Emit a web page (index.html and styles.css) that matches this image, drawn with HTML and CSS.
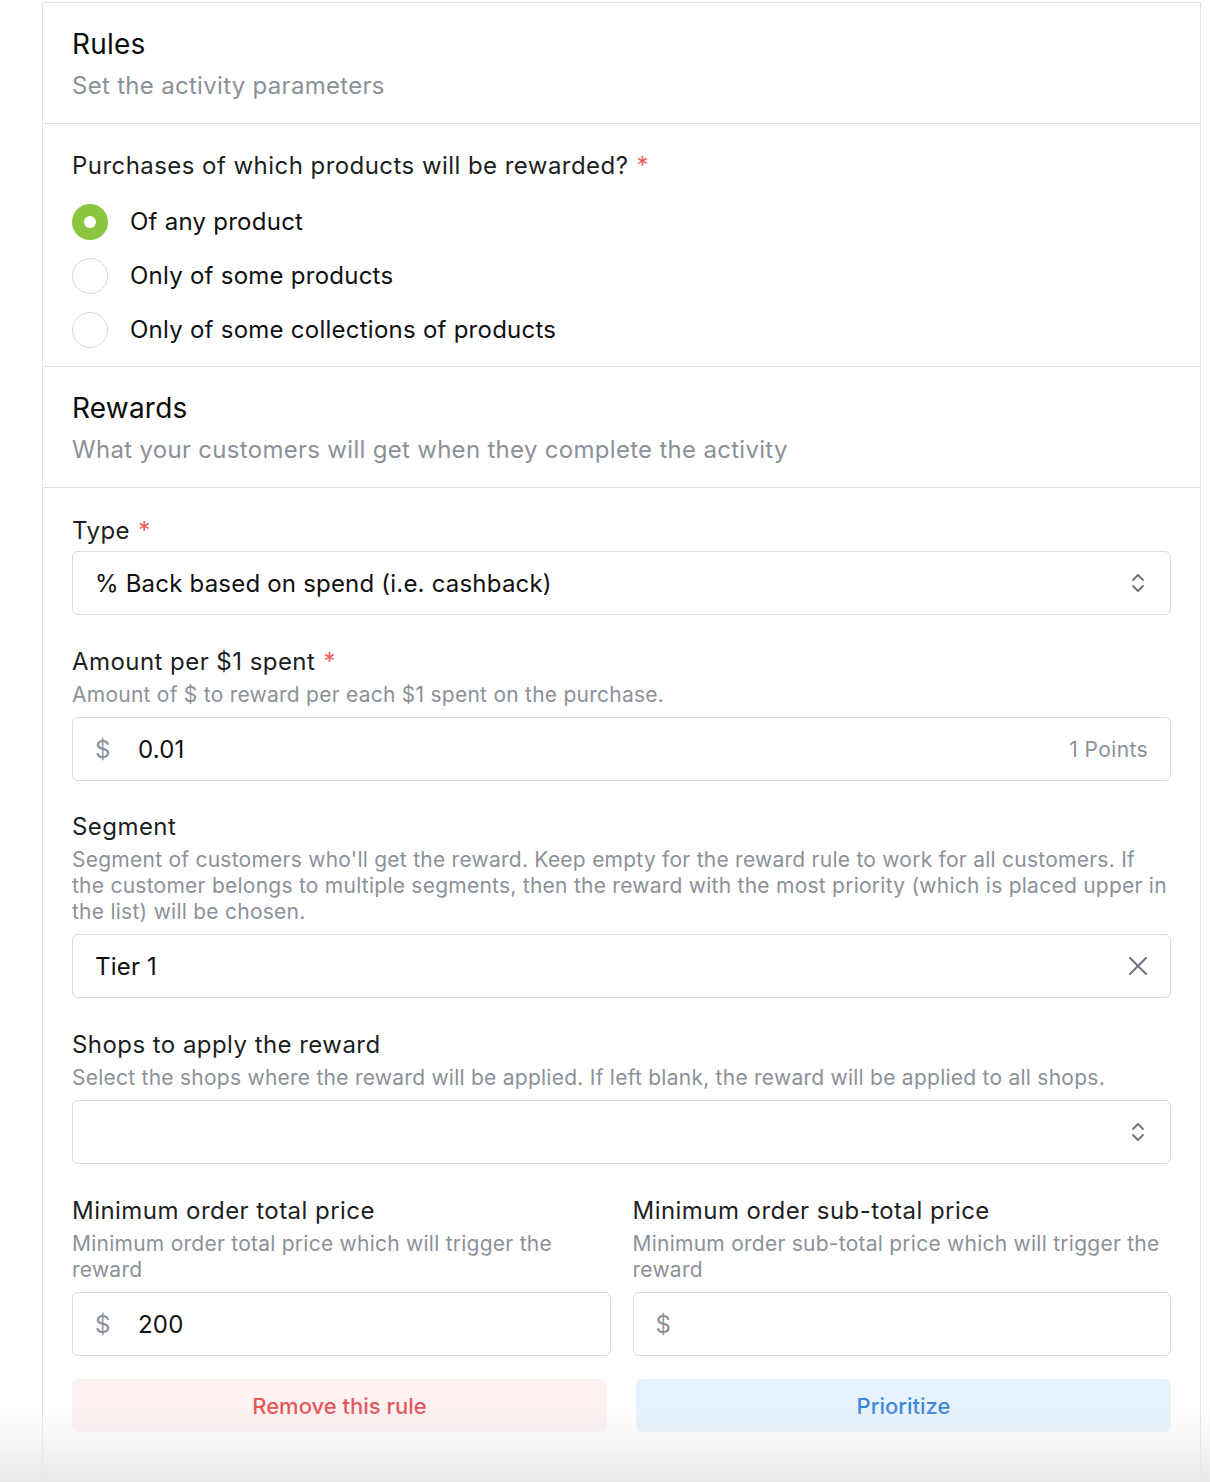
FILE: index.html
```html
<!DOCTYPE html>
<html lang="en">
<head>
<meta charset="utf-8">
<title>Rules</title>
<link rel="stylesheet" href="styles.css">
</head>
<body>
<div class="card">
  <div class="head">
    <div class="title">Rules</div>
    <div class="sub">Set the activity parameters</div>
  </div>
  <div class="section radios-section">
    <div class="label">Purchases of which products will be rewarded? <span class="req">*</span></div>
    <div class="radios">
      <div class="radio-row"><span class="radio checked"></span><span class="radio-text">Of any product</span></div>
      <div class="radio-row"><span class="radio"></span><span class="radio-text">Only of some products</span></div>
      <div class="radio-row"><span class="radio"></span><span class="radio-text">Only of some collections of products</span></div>
    </div>
  </div>
  <div class="head">
    <div class="title">Rewards</div>
    <div class="sub">What your customers will get when they complete the activity</div>
  </div>
  <div class="section form">
    <div class="field">
      <div class="label">Type <span class="req">*</span></div>
      <div class="box select">
        <span class="value">% Back based on spend (i.e. cashback)</span>
        <svg class="chev" width="16" height="22" viewBox="0 0 16 22"><path d="M3 8 L8 3 L13 8 M3 14 L8 19 L13 14" fill="none" stroke="#6b7280" stroke-width="1.8" stroke-linecap="round" stroke-linejoin="round"/></svg>
      </div>
    </div>
    <div class="field">
      <div class="label">Amount per $1 spent <span class="req">*</span></div>
      <div class="desc">Amount of $ to reward per each $1 spent on the purchase.</div>
      <div class="box money">
        <span class="cur">$</span><span class="value">0.01</span><span class="suffix">1 Points</span>
      </div>
    </div>
    <div class="field field-tight">
      <div class="label">Segment</div>
      <div class="desc">Segment of customers who'll get the reward. Keep empty for the reward rule to work for all customers. If the customer belongs to multiple segments, then the reward with the most priority (which is placed upper in the list) will be chosen.</div>
      <div class="box select">
        <span class="value">Tier 1</span>
        <svg class="x" width="20" height="20" viewBox="0 0 20 20"><path d="M2 2 L18 18 M18 2 L2 18" fill="none" stroke="#6b7280" stroke-width="2" stroke-linecap="round"/></svg>
      </div>
    </div>
    <div class="field">
      <div class="label">Shops to apply the reward</div>
      <div class="desc">Select the shops where the reward will be applied. If left blank, the reward will be applied to all shops.</div>
      <div class="box select">
        <span class="value"></span>
        <svg class="chev" width="16" height="22" viewBox="0 0 16 22"><path d="M3 8 L8 3 L13 8 M3 14 L8 19 L13 14" fill="none" stroke="#6b7280" stroke-width="1.8" stroke-linecap="round" stroke-linejoin="round"/></svg>
      </div>
    </div>
    <div class="field cols">
      <div class="col">
        <div class="label">Minimum order total price</div>
        <div class="desc">Minimum order total price which will trigger the reward</div>
        <div class="box money"><span class="cur">$</span><span class="value">200</span></div>
      </div>
      <div class="col">
        <div class="label">Minimum order sub-total price</div>
        <div class="desc">Minimum order sub-total price which will trigger the reward</div>
        <div class="box money"><span class="cur">$</span><span class="value"></span></div>
      </div>
    </div>
    <div class="actions">
      <button class="btn danger">Remove this rule</button>
      <button class="btn primary">Prioritize</button>
    </div>
  </div>
</div>
<div class="fade"></div>
</body>
</html>
```
FILE: styles.css
```css
* { box-sizing: border-box; }
html, body { margin: 0; padding: 0; background: #fff; }
body {
  font-family: Inter, "Noto Sans", "Liberation Sans", sans-serif;
  color: #1d1f23;
  height: 1482px;
  overflow: hidden;
}
.card {
  margin: 2px 0 0 42px;
  width: 1159px;
  border: 1px solid #e1e2e8;
  border-bottom: none;
  min-height: 1500px;
  background: #fff;
}
.head {
  padding: 24px 29px 20px;
  border-bottom: 1px solid #e1e2e8;
}
.title {
  font-size: 28px;
  line-height: 34px;
  color: #0b0b0c;
  letter-spacing: 0.2px;
}
.sub {
  margin-top: 8px;
  font-size: 24px;
  line-height: 34px;
  color: #8c9199;
  letter-spacing: 0.3px;
}
.section {
  padding: 25px 29px 18px;
  border-bottom: 1px solid #e1e2e8;
}
.section.form { border-bottom: none; padding-top: 26px; }
.label {
  font-size: 24px;
  line-height: 34px;
  color: #1d1f23;
  letter-spacing: 0.45px;
}
.req { color: #ef5b5b; margin-left: 1px; }
.radios {
  margin-top: 21px;
  display: flex;
  flex-direction: column;
  gap: 18px;
}
.radio-row {
  display: flex;
  align-items: center;
  height: 36px;
}
.radio {
  width: 36px;
  height: 36px;
  border-radius: 50%;
  border: 1px solid #d6d8dd;
  background: #fff;
  flex: none;
}
.radio.checked {
  border: 12px solid #8cc63f;
  background: #fff;
}
.radio-text {
  margin-left: 22px;
  font-size: 24px;
  line-height: 34px;
  letter-spacing: 0.25px;
  color: #0f1012;
}
.field { margin-top: 30px; }
.field:first-child { margin-top: 0; }
.field.field-tight { margin-top: 29px; }
.desc {
  margin-top: 3px;
  font-size: 21px;
  line-height: 26px;
  color: #8c9199;
  letter-spacing: 0.25px;
}
.box {
  margin-top: 9px;
  height: 64px;
  border: 1px solid #d6d9de;
  border-radius: 6px;
  display: flex;
  align-items: center;
  padding: 0 22px;
  font-size: 24px;
  letter-spacing: 0.2px;
  background: #fff;
}
.label + .box { margin-top: 3px; }
.box .value { flex: 1; color: #111; }
.cur { color: #8c9199; width: 43px; flex: none; }
.suffix { color: #8c9199; font-size: 21px; letter-spacing: 0.4px; }
.chev { flex: none; margin-right: 2px; }
.x { flex: none; margin-right: 0; }
.cols {
  display: grid;
  grid-template-columns: 1fr 1fr;
  column-gap: 22px;
}
.actions {
  margin-top: 23px;
  display: grid;
  grid-template-columns: 535px 535px;
  justify-content: space-between;
}
.btn {
  height: 53px;
  border: none;
  border-radius: 6px;
  font-family: Inter, Roboto, sans-serif;
  font-size: 22px;
  font-weight: 500;
  cursor: pointer;
}
.btn.danger { background: #fdf1f2; color: #e55656; }
.btn.primary { background: #e6f2fd; color: #3d86dc; }
.fade {
  position: fixed;
  left: 0; right: 0; bottom: 0;
  height: 75px;
  background: linear-gradient(to bottom, rgba(234,234,234,0), rgba(234,234,234,1));
  pointer-events: none;
}
```
